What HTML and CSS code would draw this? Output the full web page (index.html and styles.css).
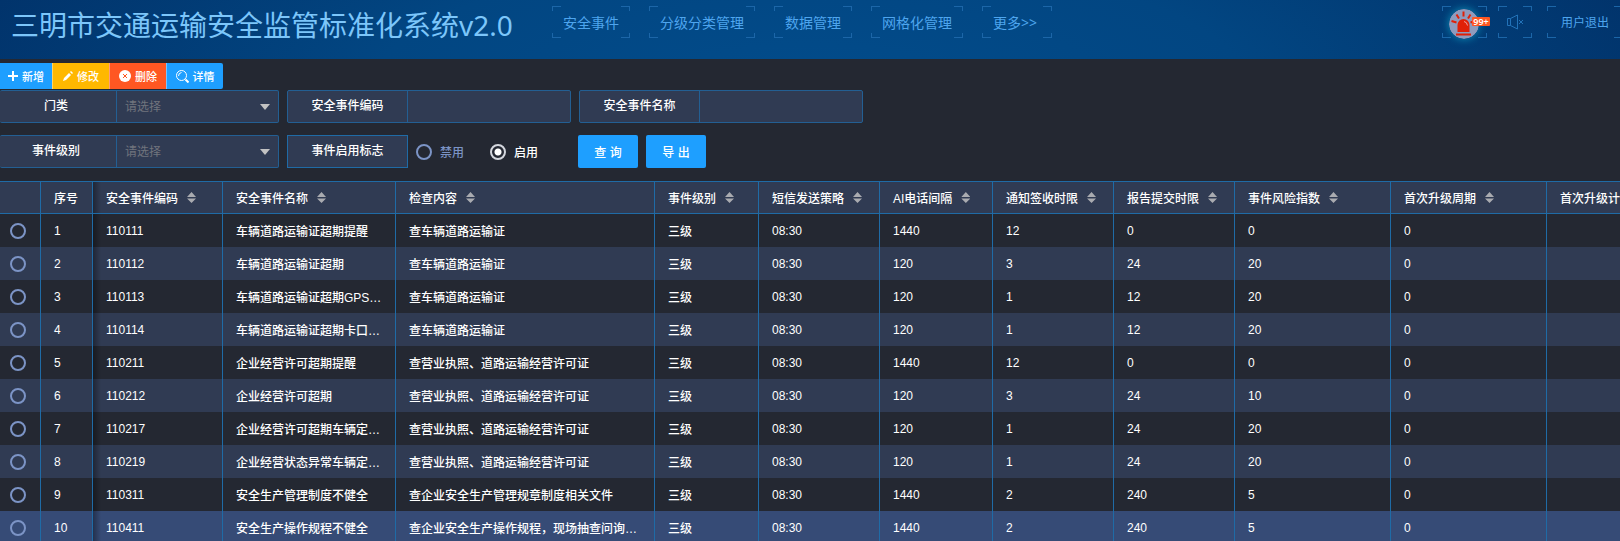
FILE: index.html
```html
<!DOCTYPE html>
<html lang="zh-CN">
<head>
    <meta charset="UTF-8">
    <meta name="viewport" content="width=device-width, initial-scale=1.0">
    <title>三明市交通运输安全监管标准化系统v2.0</title>
    <link rel="stylesheet" href="styles.css">
</head>
<body>
    <header class="header">
        <h1 class="title">三明市交通运输安全监管标准化系统v2.0</h1>
        <nav class="nav">
            <a href="#" class="corner">安全事件</a>
            <a href="#" class="corner">分级分类管理</a>
            <a href="#" class="corner">数据管理</a>
            <a href="#" class="corner">网格化管理</a>
            <a href="#" class="corner">更多&gt;&gt;</a>
        </nav>
        <div class="tools">
            <button type="button" class="corner alarm" aria-label="告警">
                <svg class="alarm-icon" viewBox="0 0 30 30">
                    <circle cx="15" cy="15" r="15" fill="#8f9bbd"/>
                    <path d="M8.500 23V16a6 6 0 0 1 12 0V23z" fill="#e02008"/>
                    <path d="M7 24.500h15v2H7z" fill="#e02008"/>
                    <path d="M14.500 2.500v5M7.500 5.500l2.500 4M21.500 5.500l-2.500 4M2.500 12l5 1.500M26.500 12l-5 1.500" stroke="#e02008" stroke-width="2"/>
                    <path d="M15 12.500q3 .5 3.500 4" stroke="#f0a0a0" fill="none"/>
                </svg>
                <span class="badge">99+</span>
            </button>
            <button type="button" class="corner mute" aria-label="静音">
                <svg width="16" height="16" viewBox="0 0 16 16" fill="none" stroke="#2272b8">
                    <path d="M.5 4.500h3v7h-3zM3.500 4.500L10.500 1v14L3.500 11.500M12 6l4 4M16 6l-4 4"/>
                </svg>
            </button>
            <a href="#" class="corner logout">用户退出</a>
        </div>
    </header>

    <div class="toolbar">
        <button type="button" class="btn add">
            <svg width="10" height="12" viewBox="0 0 10 12" stroke="#fff" stroke-width="2"><path d="M5 1v10M0 6h10"/></svg>新增
        </button>
        <button type="button" class="btn edit">
            <svg width="10" height="12" viewBox="0 0 10 12" fill="#fff"><path d="M0 11l1-3 5-5 2 2-5 5zM7 2l1-1 2 2-1 1z"/></svg>修改
        </button>
        <button type="button" class="btn del">
            <svg width="12" height="12" viewBox="0 0 12 12"><circle cx="6" cy="6" r="6" fill="#fff"/><path d="M4 4l4 4M8 4l-4 4" stroke="#ff5722"/></svg>删除
        </button>
        <button type="button" class="btn detail">
            <svg width="13" height="13" viewBox="0 0 13 13" fill="none" stroke="#fff"><circle cx="5.500" cy="5.500" r="5"/><path d="M2.500 6q0-3 3-3.500"/><path d="M9.500 9.500l3 3" stroke-width="2"/></svg>详情
        </button>
    </div>

    <form class="filters">
        <div class="row">
            <div class="field field-first">
                <label for="category">门类</label>
                <select id="category"><option>请选择</option></select>
            </div>
            <div class="field">
                <label for="code">安全事件编码</label>
                <input type="text" id="code">
            </div>
            <div class="field">
                <label for="name">安全事件名称</label>
                <input type="text" id="name">
            </div>
        </div>
        <div class="row">
            <div class="field field-first">
                <label for="level">事件级别</label>
                <select id="level"><option>请选择</option></select>
            </div>
            <div class="flag">
                <span class="flag-label">事件启用标志</span>
                <label class="choice"><input type="radio" name="flag">禁用</label>
                <label class="choice"><input type="radio" name="flag" checked>启用</label>
            </div>
            <div class="actions">
                <button type="button" class="action">查 询</button>
                <button type="button" class="action">导 出</button>
            </div>
        </div>
    </form>

    <div class="table-box">
        <table>
            <colgroup>
                <col class="w-radio"><col class="w-no"><col class="w-code"><col class="w-name"><col class="w-content"><col class="w-level">
                <col class="w-limit"><col class="w-phone"><col class="w-limit"><col class="w-limit"><col class="w-cycle"><col class="w-cycle"><col class="w-cycle">
            </colgroup>
            <thead>
                <tr>
                    <th></th>
                    <th>序号</th>
                    <th>安全事件编码<i class="sort"></i></th>
                    <th>安全事件名称<i class="sort"></i></th>
                    <th>检查内容<i class="sort"></i></th>
                    <th>事件级别<i class="sort"></i></th>
                    <th>短信发送策略<i class="sort"></i></th>
                    <th>AI电话间隔<i class="sort"></i></th>
                    <th>通知签收时限<i class="sort"></i></th>
                    <th>报告提交时限<i class="sort"></i></th>
                    <th>事件风险指数<i class="sort"></i></th>
                    <th>首次升级周期<i class="sort"></i></th>
                    <th>首次升级计</th>
                </tr>
            </thead>
            <tbody id="rows"></tbody>
        </table>
    </div>

    <script src="script.js"></script>
</body>
</html>
```

FILE: styles.css
```css
* {
    box-sizing: border-box;
}

body {
    margin: 0;
    background-color: #242832;
    color: #fff;
    font-family: "Liberation Sans", "Noto Sans CJK SC", sans-serif;
    font-size: 12px;
    overflow-x: hidden;
}

button, input, select {
    font: inherit;
    color: inherit;
}

/* 顶部 */
.header {
    display: flex;
    align-items: flex-start;
    height: 59px;
    padding: 6px 0 0 11px;
    background: radial-gradient(ellipse 60% 500% at 50% 150%, #024c8b 0%, #024682 45%, #012f66 100%);
}

.title {
    flex: none;
    width: 541px;
    margin: 0;
    font-family: "Noto Sans", "Noto Sans CJK SC", sans-serif;
    font-size: 28px;
    font-weight: 400;
    line-height: 38px;
    color: #7cc6fa;
    white-space: nowrap;
}

.nav {
    display: flex;
    gap: 19px;
    font-size: 14px;
}

/* 四角边框 */
.corner {
    --c: #1c66a8;
    display: flex;
    flex: none;
    align-items: center;
    min-width: 70px;
    height: 32px;
    padding: 0 11px;
    border: 0;
    color: #4ea5ee;
    text-decoration: none;
    font-family: "Noto Sans", "Noto Sans CJK SC", sans-serif;
    background:
        linear-gradient(var(--c), var(--c)) 0 0 / 9px 1px,
        linear-gradient(var(--c), var(--c)) 0 0 / 1px 5px,
        linear-gradient(var(--c), var(--c)) 100% 0 / 9px 1px,
        linear-gradient(var(--c), var(--c)) 100% 0 / 1px 5px,
        linear-gradient(var(--c), var(--c)) 0 100% / 9px 1px,
        linear-gradient(var(--c), var(--c)) 0 100% / 1px 5px,
        linear-gradient(var(--c), var(--c)) 100% 100% / 9px 1px,
        linear-gradient(var(--c), var(--c)) 100% 100% / 1px 5px;
    background-repeat: no-repeat;
}

.tools {
    display: flex;
    margin-left: auto;
    margin-right: -3px;
}

.alarm {
    position: relative;
    justify-content: center;
    min-width: 45px;
    padding: 3px 0 0;
}

.alarm-icon {
    width: 30px;
    height: 30px;
    border-radius: 50%;
    box-shadow: 0 0 8px #0a8fb8;
}

.badge {
    position: absolute;
    top: 11px;
    right: -3px;
    width: 18px;
    border-radius: 1px;
    background-color: #ff5722;
    color: #fff;
    font-size: 9px;
    font-weight: 600;
    line-height: 9px;
    text-align: center;
}

.mute {
    min-width: 34px;
    margin: 0 15px 0 11px;
    padding: 0 9px;
}

.logout {
    padding: 0 14px;
}

/* 工具条 */
.toolbar {
    display: flex;
    padding: 4px 0 1px;
}

.btn {
    display: flex;
    align-items: center;
    justify-content: center;
    gap: 4px;
    width: 57px;
    height: 26px;
    padding: 0;
    border: 0;
    border-left: 1px solid rgba(255, 255, 255, 0.4);
    font-size: 11px;
    font-weight: 500;
}

.add {
    width: 52px;
    border-left: 0;
    background-color: #1e9fff;
}

.edit {
    background-color: #ffb800;
}

.del {
    background-color: #ff5722;
}

.detail {
    background-color: #1e9fff;
    border-radius: 0 2px 2px 0;
}

/* 查询条件 */
.filters {
    padding-bottom: 1px;
}

.row {
    display: flex;
    gap: 8px;
    margin-bottom: 12px;
}

.field {
    display: flex;
    width: 284px;
    height: 33px;
    border: 1px solid #235f93;
    border-radius: 2px;
    background-color: #303b53;
}

.field-first {
    width: 279px;
    border-left: 0;
}

.field label, .flag-label {
    width: 119px;
    line-height: 31px;
    font-weight: 500;
    text-align: center;
}

.field-first label {
    width: 116px;
    padding-right: 4px;
}

.field input, .field select {
    flex: 1;
    min-width: 0;
    padding: 0 8px;
    border: 0;
    border-left: 1px solid #235f93;
    background: none;
    outline: none;
}

.field select {
    appearance: none;
    color: #70747d;
    background: url("data:image/svg+xml,%3Csvg xmlns='http://www.w3.org/2000/svg' viewBox='0 0 10 6'%3E%3Cpath d='M0 0h10L5 6z' fill='%23c2c2c2'/%3E%3C/svg%3E") no-repeat right 8px center / 10px 6px;
}

.flag {
    display: flex;
    align-items: center;
    width: 283px;
}

.flag-label {
    width: 121px;
    border: 1px solid #1f6ba6;
    background-color: #303b53;
}

.choice {
    display: flex;
    align-items: center;
    gap: 8px;
    width: 74px;
    padding-left: 8px;
    color: #7b93c4;
    font-weight: 500;
}

.choice:has(:checked) {
    color: #fff;
}

input[type="radio"] {
    appearance: none;
    width: 16px;
    height: 16px;
    margin: 0;
    border: 2px solid #7c94c6;
    border-radius: 50%;
}

input[type="radio"]:checked {
    border-color: #d4d7de;
    background: radial-gradient(circle, #fff 3px, transparent 4px);
}

.actions {
    display: flex;
    gap: 8px;
}

.action {
    width: 60px;
    height: 33px;
    padding: 0;
    border: 0;
    border-radius: 2px;
    background-color: #1e9fff;
    font-weight: 500;
}

/* 表格 */
.table-box {
    overflow: hidden;
}

table {
    width: 1703px;
    table-layout: fixed;
    border-collapse: separate;
    border-spacing: 0;
}

.w-radio { width: 41px; }
.w-no { width: 52px; }
.w-code { width: 130px; }
.w-name { width: 173px; }
.w-content { width: 259px; }
.w-level { width: 104px; }
.w-limit { width: 121px; }
.w-phone { width: 113px; }
.w-cycle { width: 156px; }

th, td {
    height: 33px;
    padding: 0 13px;
    border-right: 1px solid #1f6ba6;
    text-align: left;
    font-weight: 500;
    white-space: nowrap;
    overflow: hidden;
    text-overflow: ellipsis;
}

th {
    border-top: 1px solid #1f6ba6;
    border-bottom: 1px solid #1f6ba6;
    background-color: #303b53;
}

td:first-child {
    padding: 0 10px;
}

td input {
    display: block;
}

tbody tr:nth-child(even) {
    background-color: #303b53;
}

tbody tr:last-child {
    background-color: #364b76;
}

/* 固定列阴影 */
th:nth-child(3), td:nth-child(3) {
    background-image: linear-gradient(to right, rgba(0, 0, 0, 0.35), transparent 8px);
}

.sort {
    display: inline-block;
    width: 9px;
    height: 11px;
    margin-left: 9px;
    background-color: #a9abb0;
    clip-path: polygon(50% 0, 100% 45%, 0 45%, 0 60%, 100% 60%, 50% 100%, 0 60%, 0 45%);
}

/* 隐藏滚动条 */
html {
    scrollbar-width: none;
}
```

FILE: script.js
```js
var data = [
    ['110111', '车辆道路运输证超期提醒', '查车辆道路运输证', '1440', '12', '0', '0'],
    ['110112', '车辆道路运输证超期', '查车辆道路运输证', '120', '3', '24', '20'],
    ['110113', '车辆道路运输证超期GPS在线', '查车辆道路运输证', '120', '1', '12', '20'],
    ['110114', '车辆道路运输证超期卡口出现', '查车辆道路运输证', '120', '1', '12', '20'],
    ['110211', '企业经营许可超期提醒', '查营业执照、道路运输经营许可证', '1440', '12', '0', '0'],
    ['110212', '企业经营许可超期', '查营业执照、道路运输经营许可证', '120', '3', '24', '10'],
    ['110217', '企业经营许可超期车辆定位中', '查营业执照、道路运输经营许可证', '120', '1', '24', '20'],
    ['110219', '企业经营状态异常车辆定位中', '查营业执照、道路运输经营许可证', '120', '1', '24', '20'],
    ['110311', '安全生产管理制度不健全', '查企业安全生产管理规章制度相关文件', '1440', '2', '240', '5'],
    ['110411', '安全生产操作规程不健全', '查企业安全生产操作规程，现场抽查问询人员', '1440', '2', '240', '5']
];

var rows = document.getElementById('rows');

data.forEach(function(d, i) {
    var tr = rows.insertRow();
    tr.insertCell().innerHTML = '<input type="radio" name="event" aria-label="' + d[0] + '">';
    [i + 1, d[0], d[1], d[2], '三级', '08:30', d[3], d[4], d[5], d[6], '0', ''].forEach(function(text) {
        tr.insertCell().innerText = text;
    });
});
```
